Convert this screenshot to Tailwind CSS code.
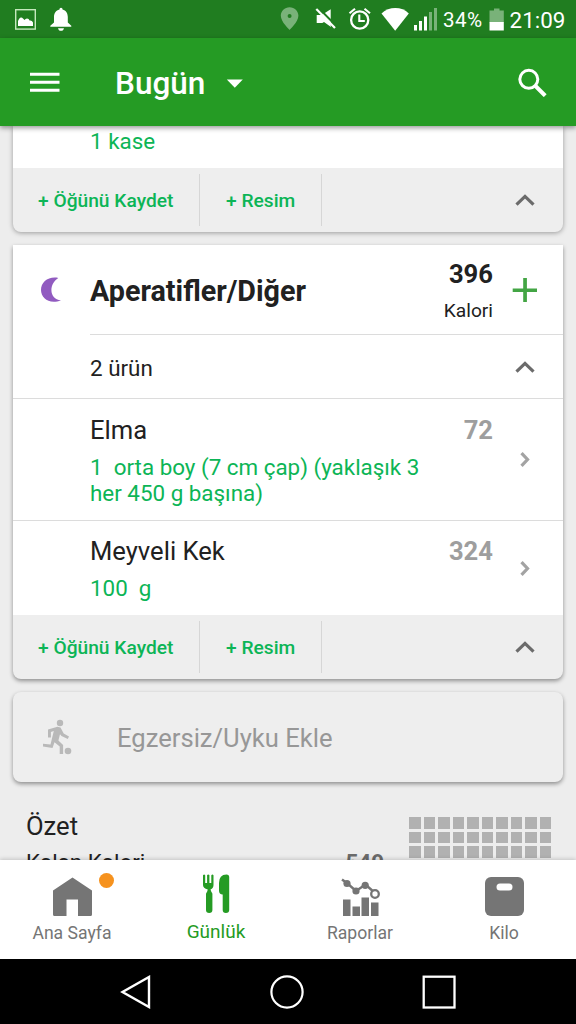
<!DOCTYPE html>
<html lang="tr">
<head>
<meta charset="utf-8">
<title>Günlük</title>
<script src="https://cdn.jsdelivr.net/npm/@tailwindcss/browser@4"></script>
</head>
<body class="w-[576px] h-[1024px] overflow-hidden bg-[#ededed] font-['Roboto',sans-serif] text-[#212121] flex flex-col">

<!-- Status bar -->
<header class="relative z-20 shrink-0">
  <div class="h-[38px] bg-[#207d20] flex items-center text-white">
    <svg class="w-[576px] h-[38px] shrink-0" viewBox="0 0 576 38" fill="#fff">
      <rect x="15.7" y="9.7" width="19.6" height="19.4" fill="none" stroke="#c5e8bd" stroke-width="1.4"/>
      <path d="M18 26v-5l1-2q2-2.500 4-.5l1.500 1.500q1-1.500 2.500-1.500 2 0 2.500 2 2.500-.5 3.500 2V26z"/>
      <path d="M61 7.700c-1 0-1.500.8-1.500 1.700-3.700.9-5.500 4-5.500 7.600v5.500l-3.700 3.300v1h21v-1l-3.500-3.300V17c0-3.600-1.700-6.700-5.300-7.600 0-.9-.5-1.700-1.500-1.700zM58 28.200c.3 1.700 1.400 2.600 3 2.600s2.700-.9 3-2.600z"/>
      <path fill="#79b279" fill-rule="evenodd" d="M289.600 7.200c-5 0-8.800 3.800-8.800 8.600 0 6 8.800 14.200 8.800 14.200s8.800-8.200 8.800-14.200c0-4.800-3.800-8.600-8.800-8.600zm0 6.800a2 2 0 1 1 0 4 2 2 0 0 1 0-4z"/>
      <path d="M330.700 9.300v16.200L331 27l-7-5-1.700 1h-5.600v-8h5z"/>
      <path d="M318.800 8.200l18 18.300" stroke="#207d20" stroke-width="2"/>
      <path d="M316.300 9l18.700 19" stroke="#fff" stroke-width="2.200"/>
      <circle cx="359.700" cy="20" r="8.600" fill="none" stroke="#fff" stroke-width="2.300"/>
      <path d="M359.300 14.500v6.500h5.500M349.500 13.300l5.500-4.500M370 13.300l-5.500-4.500" fill="none" stroke="#fff" stroke-width="2.100"/>
      <path d="M381.500 13.500c7.500-7.300 20.300-7.300 27.300 0L395.200 30.700z"/>
      <path d="M414 25h3v5.500h-3zM419 21h3v9.500h-3zM424 16.500h3v14h-3z"/>
      <path fill="#79b279" d="M429 12h3v18.500h-3zM434 8h3v22.500h-3z"/>
      <text x="443" y="26.900" font-size="20.600" textLength="39">34%</text>
      <path fill="#79b279" d="M494 8.500h5.500v2h4.300v12h-14.300v-12h4.500z"/>
      <path d="M489.500 22h14.300v8.500h-14.300z"/>
      <text x="509.600" y="27.600" font-size="22.400">21:09</text>
    </svg>
  </div>
  <div class="h-[88px] bg-[#259b24] shadow-[0_2px_5px_rgba(0,0,0,0.4)] flex items-center pl-[30px] pr-[29px] text-white">
    <svg class="w-[30px] h-[20px]" viewBox="0 0 30 20" fill="#fff"><path d="M0 .7h29.500v3H0zM0 8.700h29.500v3H0zM0 16.700h29.500v3H0z"/></svg>
    <span class="ml-[55px] mt-[3px] text-[31.500px] leading-10 font-medium"><span class="inline-block w-[90px]">Bugün</span></span>
    <svg class="ml-[21px] mt-[2px] w-[17px] h-[9px]" viewBox="0 0 17 9" fill="#fff"><path d="M.8.500h16L8.800 8.800z"/></svg>
    <svg class="ml-auto w-[29px] h-[29px]" viewBox="0 0 29 29" fill="none" stroke="#fff"><circle cx="10.800" cy="11.300" r="9" stroke-width="3"/><path d="M17.500 18l9.700 9.700" stroke-width="4"/></svg>
  </div>
</header>

<!-- Diary -->
<main class="h-[734px] shrink-0 overflow-hidden px-[13px] flex flex-col">
  <section class="h-[106px] w-[550px] shrink-0 rounded-b-[8px] overflow-hidden shadow-[0_1px_5px_rgba(0,0,0,0.35)] bg-[#eee]">
    <div class="h-[42px] bg-white pl-[77px] pt-[1px] text-[22.4px] leading-[28px] text-[#0cb556]">1 kase</div>
    <div class="h-[64px] flex items-center text-[19.2px] font-medium text-[#0cb556]">
      <div class="w-[187px] h-[52px] pl-[25px] pt-[2px] border-r border-[#d6d6d6] flex items-center whitespace-nowrap">+ Öğünü Kaydet</div>
      <div class="w-[122px] h-[52px] pl-[26px] pt-[2px] border-r border-[#d6d6d6] flex items-center whitespace-nowrap">+ Resim</div>
      <svg class="ml-auto mr-[28px] w-[20px] h-[12px]" viewBox="0 0 20 12" fill="none" stroke="#6b6b6b" stroke-width="3.200"><path d="M1.500 10.700L10 2.400l8.500 8.300"/></svg>
    </div>
  </section>

  <section class="mt-[13px] h-[434px] w-[550px] shrink-0 rounded-b-[8px] overflow-hidden shadow-[0_2px_4px_rgba(0,0,0,0.4)] bg-[#eee]">
    <div class="h-[370px] bg-white flex flex-col">
      <div class="h-[90px] shrink-0 flex">
        <div class="w-[77px] flex items-center pl-[28px]">
          <svg class="w-[20px] h-[26px]" viewBox="0 0 20 26" fill="#915bc0"><path d="M17.300.900C7.500-1 0 5 0 13s8.500 15 20 10.300C8.500 22.500 7 7.500 17.300.900z"/></svg>
        </div>
        <div class="flex-1 border-b border-[#dcdcdc] flex items-center">
          <h2 class="mt-[2px] text-[28.700px] leading-8 font-bold">Aperatifler/Diğer</h2>
          <div class="ml-auto w-[100px] pt-[6px] text-right">
            <div class="text-[25.600px] leading-[36px] font-bold">396</div>
            <div class="text-[19.200px] leading-[37px]">Kalori</div>
          </div>
          <svg class="ml-[19px] mr-[25px] w-[26px] h-[26px]" viewBox="0 0 26 26" fill="#43a544"><path d="M11.200 1h3.700v10.400h10.100v3.500H14.900V25h-3.700V14.900H.7v-3.500h10.500z"/></svg>
        </div>
      </div>
      <div class="h-[64px] shrink-0 border-b border-[#dcdcdc] pl-[77px] pr-[28px] flex items-center justify-between text-[22.400px] leading-7">
        <span class="mt-[3px]">2 ürün</span>
        <svg class="mt-[1px] w-[20px] h-[12px]" viewBox="0 0 20 12" fill="none" stroke="#6b6b6b" stroke-width="3.200"><path d="M1.500 10.700L10 2.400l8.500 8.300"/></svg>
      </div>
      <div class="h-[122px] shrink-0 border-b border-[#dcdcdc] pl-[77px] flex">
        <div class="w-[340px] pt-[15px]">
          <h3 class="text-[25.600px] leading-8">Elma</h3>
          <p class="mt-[8px] text-[22.400px] leading-[26.300px] text-[#0cb556] whitespace-pre">1  orta boy (7 cm çap) (yaklaşık 3
her 450 g başına)</p>
        </div>
        <div class="ml-auto mr-[27px] pt-[15px] text-[25.600px] leading-8 font-bold text-[#9e9e9e]">72</div>
        <svg class="mt-[53px] mr-[33px] w-[10px] h-[15px]" viewBox="0 0 10 15" fill="none" stroke="#a3a3a3" stroke-width="3.200"><path d="M1.500 1.200l6 6.300-6 6.300"/></svg>
      </div>
      <div class="flex-1 pl-[77px] flex">
        <div class="w-[340px] pt-[14px]">
          <h3 class="text-[25.600px] leading-8">Meyveli Kek</h3>
          <p class="mt-[8px] text-[22.400px] leading-[26.300px] text-[#0cb556] whitespace-pre">100  g</p>
        </div>
        <div class="ml-auto mr-[27px] pt-[14px] text-[25.600px] leading-8 font-bold text-[#9e9e9e]">324</div>
        <svg class="mt-[40px] mr-[33px] w-[10px] h-[15px]" viewBox="0 0 10 15" fill="none" stroke="#a3a3a3" stroke-width="3.200"><path d="M1.500 1.200l6 6.300-6 6.300"/></svg>
      </div>
    </div>
    <div class="h-[64px] flex items-center text-[19.200px] font-medium text-[#0cb556]">
      <div class="w-[187px] h-[52px] pl-[25px] pt-[2px] border-r border-[#d6d6d6] flex items-center whitespace-nowrap">+ Öğünü Kaydet</div>
      <div class="w-[122px] h-[52px] pl-[26px] pt-[2px] border-r border-[#d6d6d6] flex items-center whitespace-nowrap">+ Resim</div>
      <svg class="ml-auto mr-[28px] w-[20px] h-[12px]" viewBox="0 0 20 12" fill="none" stroke="#6b6b6b" stroke-width="3.200"><path d="M1.500 10.700L10 2.400l8.500 8.300"/></svg>
    </div>
  </section>

  <section class="mt-[13px] h-[90px] w-[550px] shrink-0 rounded-[8px] shadow-[0_2px_4px_rgba(0,0,0,0.4)] bg-[#eee] flex items-center pl-[29px]">
    <svg class="w-[30px] h-[36px]" viewBox="0 0 30 36" fill="#b9b9b9">
      <circle cx="18" cy="4" r="3.200"/><circle cx="26" cy="32" r="3.300"/>
      <path d="M6 10.500L15.500 7.800l3 .7 3.200 6L27 17.500l-1.200 2.600-6.300-3-1.500-1.800-1.600 6.200 4.700 4.500V35h-3.400v-7.400l-5.200-4.400-2 5.800L1 27.500v-2.800l7.500.7 3.300-13.300-2.900.9v5.500H6z"/>
    </svg>
    <span class="ml-[45px] mt-[2px] text-[25.600px] leading-8 text-[#979797]">Egzersiz/Uyku Ekle</span>
  </section>

  <section class="flex pl-[13px] shrink-0">
    <div class="w-[130px] pt-[28px] whitespace-nowrap">
      <h3 class="text-[25.600px] leading-8">Özet</h3>
      <p class="mt-[6px] text-[22.400px] leading-7">Kalan Kalori</p>
    </div>
    <div class="w-[228px] pt-[66px] text-right text-[22.400px] leading-7 font-bold text-[#6b6b6b]">549</div>
    <div class="ml-auto mr-[12px] mt-[35px] h-[41px] w-[142px] grid grid-cols-10 grid-rows-3 gap-[3px]">
      <i class="bg-[#b1b1b1]"></i><i class="bg-[#b1b1b1]"></i><i class="bg-[#b1b1b1]"></i><i class="bg-[#b1b1b1]"></i><i class="bg-[#b1b1b1]"></i><i class="bg-[#b1b1b1]"></i><i class="bg-[#b1b1b1]"></i><i class="bg-[#b1b1b1]"></i><i class="bg-[#b1b1b1]"></i><i class="bg-[#b1b1b1]"></i>
      <i class="bg-[#b1b1b1]"></i><i class="bg-[#b1b1b1]"></i><i class="bg-[#b1b1b1]"></i><i class="bg-[#b1b1b1]"></i><i class="bg-[#b1b1b1]"></i><i class="bg-[#b1b1b1]"></i><i class="bg-[#b1b1b1]"></i><i class="bg-[#b1b1b1]"></i><i class="bg-[#b1b1b1]"></i><i class="bg-[#b1b1b1]"></i>
      <i class="bg-[#b1b1b1]"></i><i class="bg-[#b1b1b1]"></i><i class="bg-[#b1b1b1]"></i><i class="bg-[#b1b1b1]"></i><i class="bg-[#b1b1b1]"></i><i class="bg-[#b1b1b1]"></i><i class="bg-[#b1b1b1]"></i><i class="bg-[#b1b1b1]"></i><i class="bg-[#b1b1b1]"></i><i class="bg-[#b1b1b1]"></i>
    </div>
  </section>
</main>

<!-- Bottom tabs -->
<nav class="relative z-10 h-[99px] shrink-0 bg-white shadow-[0_-1px_4px_rgba(0,0,0,0.18)] grid grid-cols-4 text-[17.600px] leading-6 text-[#757575]">
  <div class="relative flex flex-col items-center pt-[17px]">
    <svg class="w-[39px] h-[39px]" viewBox="0 0 39 39" fill="#757575"><path d="M19.500 0.500L39 13.500V37.500a1.500 1.500 0 0 1-1.500 1.500H25V22.500H13.500V39H1.500A1.500 1.500 0 0 1 0 37.500V13.500z"/></svg>
    <span class="mt-[5px]">Ana Sayfa</span>
    <i class="absolute left-[99px] top-[13px] size-[15px] rounded-full bg-[#f6921e]"></i>
  </div>
  <div class="flex flex-col items-center pt-[14px] text-[#259b24]">
    <svg class="w-[28px] h-[40px]" viewBox="0 0 28 40" fill="#259b24">
      <path d="M1 1.200q1.200-1.200 2.200 0V9h1.900V1q1.200-1.200 2.300 0v8h1.900V1.200q1.200-1.200 2.200 0V11q0 3.500-3 4.400l.9 2.600q1 .8 1 2V36q0 3-3.200 3t-3.200-3V20q0-1.200 1-2l.8-2.600Q1 14.500 1 11z"/>
      <path d="M17 9q0-8.500 7.500-8.500 2.700 0 2.700 2.500V36q0 3-3.300 3-3.200 0-3.200-3V20.500Q17 20.500 17 16.500z"/>
    </svg>
    <span class="mt-[6px] text-[19px] leading-6">Günlük</span>
  </div>
  <div class="flex flex-col items-center pt-[17px]">
    <svg class="w-[39px] h-[39px]" viewBox="0 0 39 39" fill="#757575">
      <path d="M2 22.500h7.500V39H2zM11.500 29.500H19V39h-7.500zM20.500 20.500H28V39h-7.500zM30 25.500h7.500V39H30z"/>
      <path d="M1 2.500l5.500 4L15 14l9.500-6.500 9.500 8.500" fill="none" stroke="#757575" stroke-width="2.400"/>
      <circle cx="6" cy="6.500" r="3.600"/><circle cx="15" cy="14" r="3.600"/><circle cx="24.200" cy="8.300" r="3.600"/>
      <circle cx="34" cy="17" r="3.800" fill="#fff" stroke="#757575" stroke-width="2.300"/>
    </svg>
    <span class="mt-[5px]">Raporlar</span>
  </div>
  <div class="flex flex-col items-center pt-[17px]">
    <svg class="w-[39px] h-[39px]" viewBox="0 0 39 39"><rect width="39" height="39" rx="6" fill="#757575"/><rect x="11.500" y="6.500" width="16" height="7" rx="3.500" fill="#fff"/></svg>
    <span class="mt-[5px]">Kilo</span>
  </div>
</nav>

<!-- System navigation -->
<footer class="relative z-10 h-[65px] shrink-0 bg-black flex items-center justify-between pl-[120px] pr-[120px]">
  <svg class="w-[31px] h-[34px]" viewBox="0 0 31 34" fill="none" stroke="#fff" stroke-width="2.400"><path d="M29 2v30L2.500 17z"/></svg>
  <svg class="w-[34px] h-[34px]" viewBox="0 0 34 34" fill="none" stroke="#fff" stroke-width="2.200"><circle cx="17" cy="17" r="15.600"/></svg>
  <svg class="w-[34px] h-[34px]" viewBox="0 0 34 34" fill="none" stroke="#fff" stroke-width="2.300"><rect x="1.700" y="1.700" width="30.800" height="30.800"/></svg>
</footer>
</body>
</html>
